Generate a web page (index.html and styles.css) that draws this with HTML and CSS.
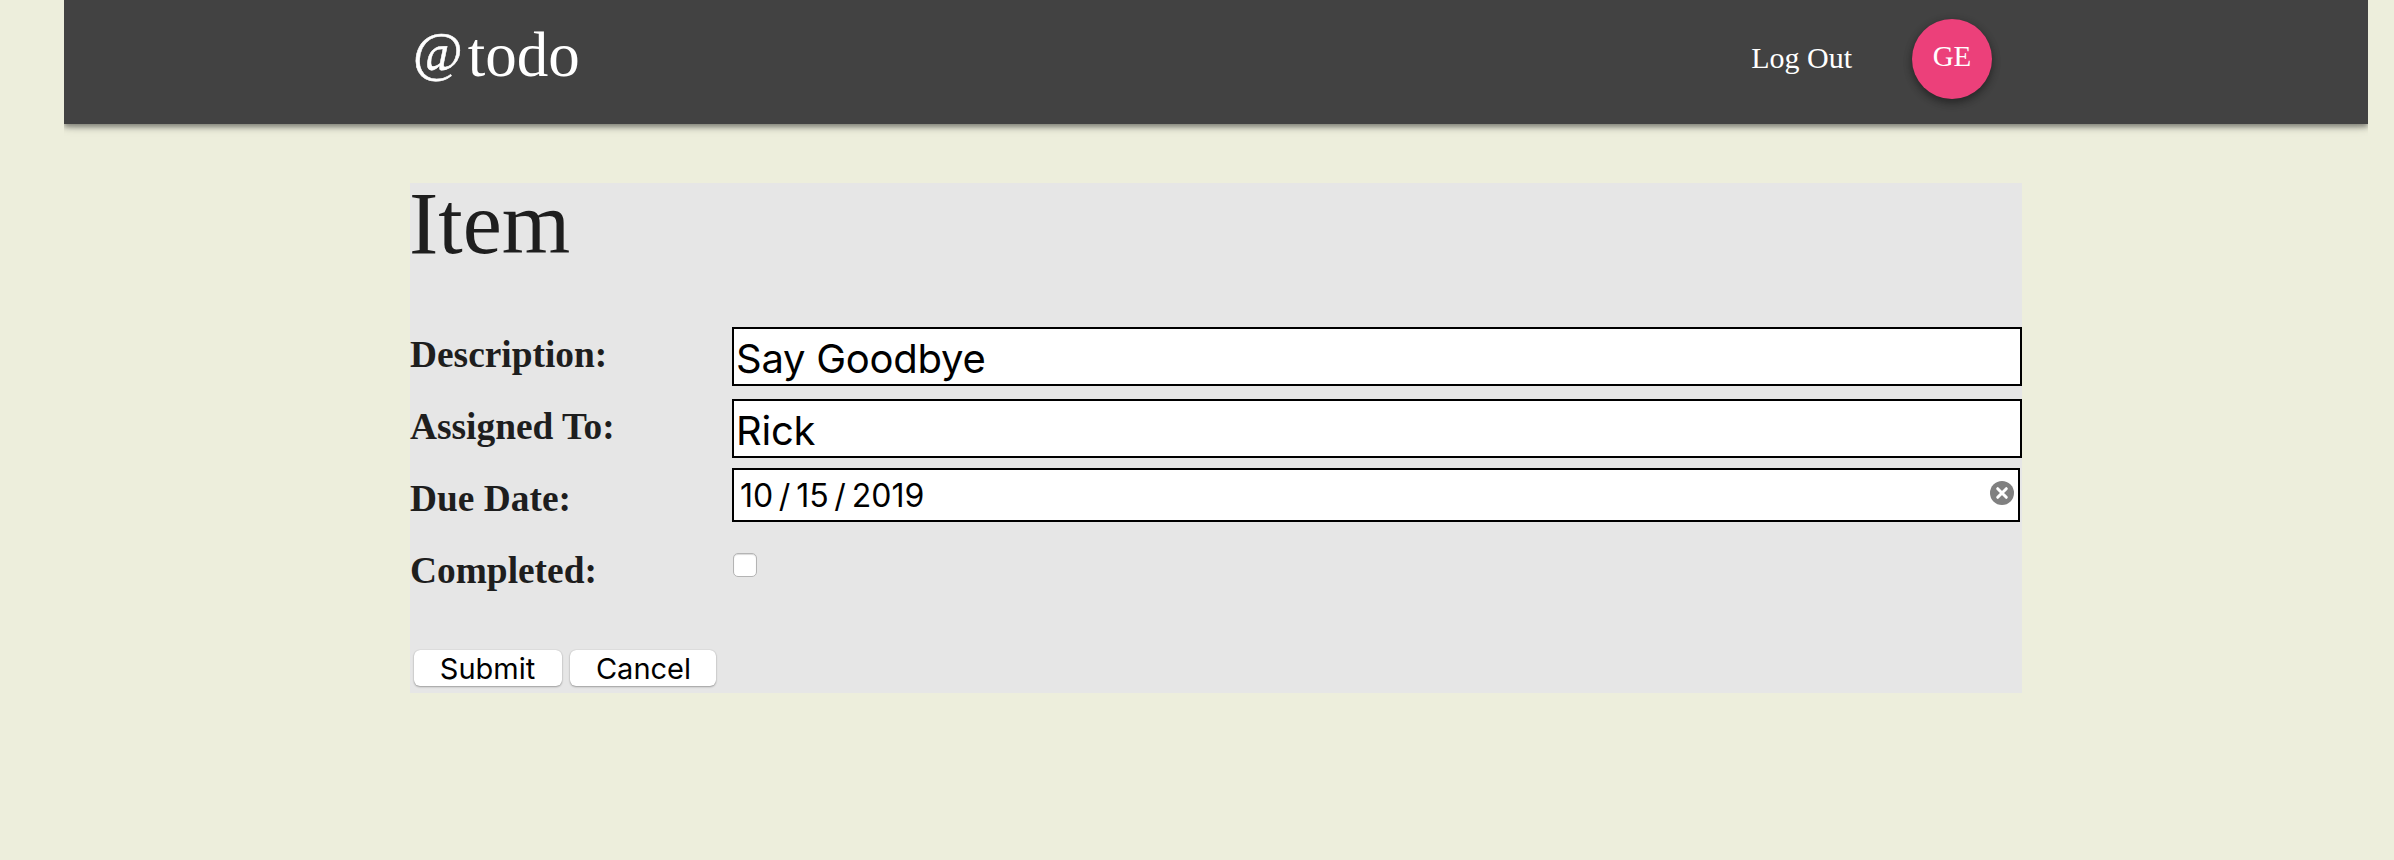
FILE: index.html
```
<!DOCTYPE html>
<html lang="en">
<head>
<meta charset="utf-8">
<title>@todo</title>
<link rel="stylesheet" href="styles.css">
</head>
<body>
<header class="bar">
  <div class="logo"><span class="at">@</span>todo</div>
  <nav class="account">
    <a class="logout">Log Out</a>
    <div class="avatar">GE</div>
  </nav>
</header>
<main class="panel">
  <h1 class="title">Item</h1>
  <form class="form">
    <div class="row">
      <label class="label" for="description">Description:</label>
      <input class="field" id="description" type="text" value="Say Goodbye">
    </div>
    <div class="row">
      <label class="label" for="assigned">Assigned To:</label>
      <input class="field" id="assigned" type="text" value="Rick">
    </div>
    <div class="row">
      <span class="label">Due Date:</span>
      <div class="date">
        <div class="date-parts"><span>10</span><span class="slash">/</span><span>15</span><span class="slash">/</span><span>2019</span></div>
        <svg class="clear" viewBox="0 0 24 24"><circle cx="12" cy="12" r="12" fill="#808080"/><path d="M7.7 7.7l8.6 8.6M16.3 7.7l-8.6 8.6" stroke="#fff" stroke-width="3" stroke-linecap="round"/></svg>
      </div>
    </div>
    <div class="row">
      <label class="label" for="completed">Completed:</label>
      <input class="check" id="completed" type="checkbox">
    </div>
    <div class="actions">
      <button class="btn btn-submit" type="button">Submit</button>
      <button class="btn btn-cancel" type="button">Cancel</button>
    </div>
  </form>
</main>
</body>
</html>
```
FILE: styles.css
```
* { box-sizing: border-box; }
html { background: #edeedc; }
body {
  margin: 0 26px 0 64px;
  font-family: "Liberation Serif", "Times New Roman", serif;
  color: #1e1e1e;
}
.bar {
  display: flex;
  justify-content: space-between;
  height: 124px;
  padding: 0 376px 0 346px;
  background: #424242;
  color: #fff;
  box-shadow: 0 3px 5px rgba(0, 0, 0, .35), 0 2px 10px rgba(0, 0, 0, .22);
}
.logo { padding-left: 3px; font-size: 63px; line-height: 111px; }
.at { margin-right: 5px; font-size: 54px; line-height: 0; vertical-align: 6px; -webkit-text-stroke: .5px #fff; }
.account { display: flex; align-items: flex-start; gap: 60px; padding-top: 19px; }
.logout { font-size: 30px; line-height: 78px; }
.avatar {
  width: 80px;
  height: 80px;
  border-radius: 50%;
  background: #ec407a;
  font-size: 29px;
  line-height: 75px;
  text-align: center;
  box-shadow: 0 4px 8px rgba(0, 0, 0, .3), 0 2px 10px rgba(0, 0, 0, .2);
}
.panel {
  width: 1612px;
  height: 510px;
  margin: 59px 0 0 346px;
  background: #e6e6e6;
}
.title { margin: 0 0 0 -1px; font-size: 88px; font-weight: 400; line-height: 81px; }
.form { padding-top: 54px; }
.row { display: grid; grid-template-columns: 322px 1290px; height: 72px; align-items: start; }
.label { font-size: 37.4px; font-weight: 700; line-height: 73px; white-space: nowrap; }
.field {
  width: 1290px;
  height: 59px;
  margin: 9px 0 0;
  padding: 3px 2px 0;
  border: 2px solid #000;
  border-radius: 0;
  background: #fff;
  color: #000;
  font: 40px Inter, sans-serif;
  letter-spacing: -.25px;
  outline: none;
}
.date {
  display: flex;
  justify-content: space-between;
  width: 1288px;
  height: 54px;
  margin-top: 6px;
  padding: 0 4px 0 6px;
  border: 2px solid #000;
  background: #fff;
  color: #000;
}
.date-parts { display: flex; font: 32px/52px Inter, sans-serif; }
.slash { padding: 0 6px 0 5.5px; }
.clear { width: 24px; height: 24px; margin-top: 11px; }
.check {
  appearance: none;
  width: 24px;
  height: 24px;
  margin: 19px 0 0 1px;
  border: 1px solid #b4b4b4;
  border-radius: 5px;
  background: #fff;
  box-shadow: inset 0 1px 1px rgba(0, 0, 0, .15);
}
.actions { display: flex; gap: 8px; padding: 44px 0 0 4px; }
.btn {
  height: 36px;
  padding: 0;
  border: 0;
  border-radius: 6px;
  background: #fff;
  color: #000;
  font: 29px/35px Inter, sans-serif;
  box-shadow: 0 0 1px rgba(0, 0, 0, .25), 0 1px 2px rgba(0, 0, 0, .3);
}
.btn-submit { width: 148px; padding-right: 1px; }
.btn-cancel { width: 146px; padding-left: 1px; }
```
